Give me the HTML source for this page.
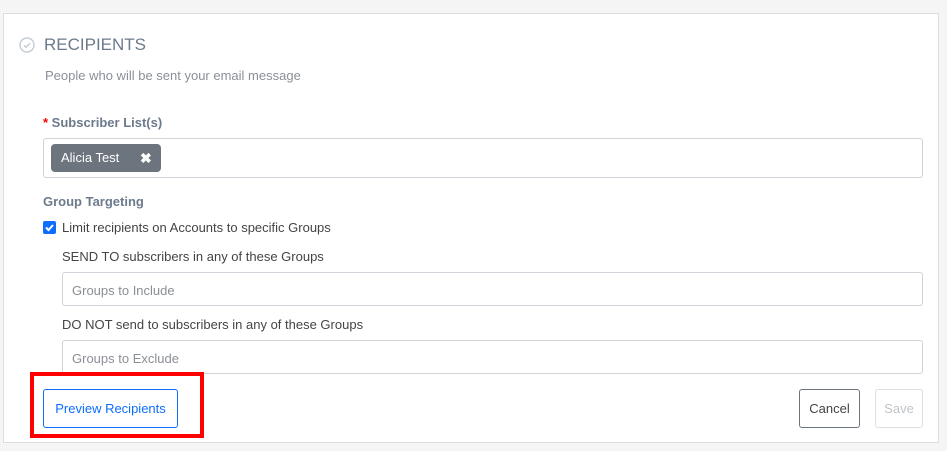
<!DOCTYPE html>
<html><head><style>
*{box-sizing:border-box;margin:0;padding:0}
body{width:947px;height:451px;background:#f5f5f5;font-family:"Liberation Sans",sans-serif;position:relative;overflow:hidden}
.card{position:absolute;left:3px;top:13px;width:936px;height:430px;background:#fff;border:1px solid #ddd}
.a{position:absolute;white-space:nowrap}
.inp{position:absolute;border:1px solid #ced4da;border-radius:3px;background:#fff}
.ph{font-size:13px;color:#8a8f95}
</style></head><body>
<div class="card"></div>
<svg class="a" style="left:19px;top:37px" width="16" height="16" viewBox="0 0 16 16"><circle cx="8" cy="8" r="7" fill="none" stroke="#c5ccd3" stroke-width="1.4"/><path d="M5 8.2l2 2 4-4" fill="none" stroke="#c5ccd3" stroke-width="1.4"/></svg>
<div class="a" style="left:44px;top:35px;font-size:17px;color:#6c7a8c">RECIPIENTS</div>
<div class="a" style="left:45px;top:68px;font-size:13px;color:#8a9099">People who will be sent your email message</div>
<div class="a" style="left:43px;top:115px;font-size:13px;font-weight:bold;color:#6c7a8c"><span style="color:red">*</span> Subscriber List(s)</div>
<div class="inp" style="left:43px;top:138px;width:880px;height:40px"></div>
<div class="a" style="left:51px;top:144px;width:110px;height:28px;background:#6c757d;border-radius:4px;color:#fff;font-size:13px;line-height:28px;padding-left:10px">Alicia Test<span style="position:absolute;left:89px;font-weight:bold;font-size:14px">✖</span></div>
<div class="a" style="left:43px;top:194px;font-size:13px;font-weight:bold;color:#6c7a8c">Group Targeting</div>
<div class="a" style="left:43px;top:221px;width:13px;height:13px;background:#0d6efd;border-radius:2px"><svg width="13" height="13" viewBox="0 0 13 13" style="position:absolute;left:0;top:0"><path d="M3 6.5l2.5 2.5 4.5-5" fill="none" stroke="#fff" stroke-width="2"/></svg></div>
<div class="a" style="left:62px;top:220px;font-size:13px;color:#444">Limit recipients on Accounts to specific Groups</div>
<div class="a" style="left:62px;top:249px;font-size:13px;color:#444">SEND TO subscribers in any of these Groups</div>
<div class="inp" style="left:62px;top:272px;width:861px;height:34px"><span class="a ph" style="left:9px;top:10px">Groups to Include</span></div>
<div class="a" style="left:62px;top:317px;font-size:13px;color:#444">DO NOT send to subscribers in any of these Groups</div>
<div class="inp" style="left:62px;top:340px;width:861px;height:34px"><span class="a ph" style="left:9px;top:10px">Groups to Exclude</span></div>
<div class="a" style="left:30px;top:372px;width:174px;height:66px;border:4px solid #f00"></div>
<div class="a" style="left:43px;top:389px;width:135px;height:39px;border:1px solid #0d6efd;border-radius:3px;color:#0d6efd;font-size:13px;line-height:37px;text-align:center">Preview Recipients</div>
<div class="a" style="left:799px;top:389px;width:61px;height:39px;border:1px solid #6c757d;border-radius:3px;color:#444;font-size:13px;line-height:37px;text-align:center">Cancel</div>
<div class="a" style="left:875px;top:389px;width:48px;height:39px;border:1px solid #dde0e3;border-radius:3px;color:#c0c4c8;font-size:13px;line-height:37px;text-align:center">Save</div>
</body></html>
